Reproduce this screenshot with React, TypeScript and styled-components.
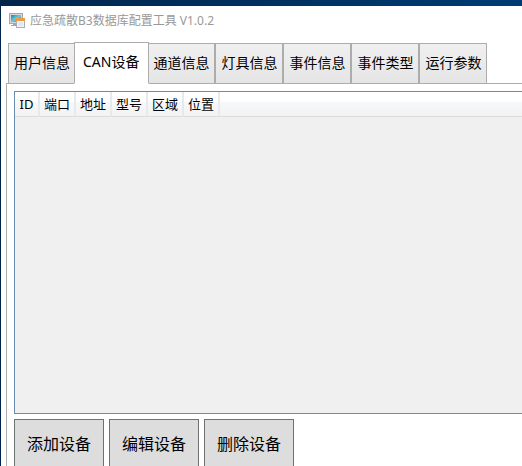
import React, { useState } from "react";
import styled, { createGlobalStyle } from "styled-components";

const GlobalStyle = createGlobalStyle`
  * { box-sizing: border-box; }
  body {
    margin: 0;
    overflow: hidden;
    font-family: "Noto Sans", "Noto Sans CJK SC", sans-serif;
    color: #000;
    background: #fff;
  }
  button { font-family: inherit; color: inherit; }
`;

const Desktop = styled.div`
  height: 100vh;
  overflow: hidden;
  padding: 6px 0 0 1px;
  background: linear-gradient(90deg, #01244a, #003c74);
`;

const AppWindow = styled.div`
  min-height: 100%;
  background: #fff;
`;

const TitleBar = styled.header`
  display: flex;
  align-items: center;
  gap: 5px;
  height: 29px;
  padding-left: 8px;
`;

const Title = styled.h1`
  margin: 0;
  font-size: 12px;
  line-height: 16px;
  font-weight: 400;
  color: #999;
  white-space: nowrap;
`;

const TabList = styled.div`
  display: flex;
  align-items: flex-end;
  height: 49px;
  padding-left: 7px;
`;

const Tab = styled.button<{ $active: boolean }>`
  flex: none;
  display: flex;
  align-items: center;
  justify-content: center;
  height: ${(p) => (p.$active ? 42 : 41)}px;
  margin: ${(p) => (p.$active ? "0 -2px" : "0")};
  padding: ${(p) => (p.$active ? "0 9px 2px 8px" : "0 5px 2px")};
  border: 1px solid #acacac;
  border-bottom-color: ${(p) => (p.$active ? "#fff" : "#acacac")};
  background: ${(p) => (p.$active ? "#fff" : "linear-gradient(#f0f0f0, #e5e5e5)")};
  position: relative;
  z-index: ${(p) => (p.$active ? 1 : 0)};
  font-size: 14px;
  line-height: 20px;
  white-space: nowrap;
`;

const TabPanel = styled.main`
  margin: -1px 0 0 5px;
  padding: 7px 0 0 7px;
  border: solid #acacac;
  border-width: 1px 0 0 1px;
`;

const ListView = styled.div`
  height: 323px;
  border: solid #688caf;
  border-width: 1px 0 1px 1px;
  background: #f0f0f0;
`;

const DeviceTable = styled.table`
  width: 100%;
  border-collapse: separate;
  border-spacing: 0;
`;

const HeaderRow = styled.tr`
  background: linear-gradient(#fff 0 40%, #f7f8fa 41%, #f1f2f4);
`;

const HeaderCell = styled.th<{ $width?: number }>`
  width: ${(p) => (p.$width ? `${p.$width}px` : "auto")};
  height: 25px;
  padding: 0;
  border-right: ${(p) => (p.$width ? "2px solid #e8e9eb" : "0")};
  border-bottom: 1px solid #dcdcdc;
  font-size: 13px;
  line-height: 20px;
  font-weight: 400;
  text-align: center;
  white-space: nowrap;
`;

const Actions = styled.div`
  display: flex;
  gap: 5px;
  padding-top: 5px;
`;

const ActionButton = styled.button`
  height: 50px;
  padding: 0 12px;
  border: 1px solid #707070;
  background: #ddd;
  font-size: 16px;
  line-height: 24px;
  white-space: nowrap;
`;

const AppIcon = () => (
  <svg width="16" height="16" viewBox="0 0 16 16" aria-hidden="true">
    <defs>
      <linearGradient id="screen" x1="0" y1="0" x2="1" y2="1">
        <stop offset="0" stopColor="#1b83a6" />
        <stop offset="0.5" stopColor="#6fc6dc" />
        <stop offset="1" stopColor="#2a8fb4" />
      </linearGradient>
    </defs>
    <rect x="0.5" y="0.5" width="13" height="10" fill="#d8d8d8" stroke="#a3a7aa" />
    <rect x="2" y="2" width="10" height="7" fill="url(#screen)" />
    <path d="M4 11h4v1h1v1H2v-1h2z" fill="#a6a6a6" />
    <rect x="7.5" y="5.5" width="8" height="9" fill="#f4f5fa" stroke="#a9adba" />
    <rect x="7" y="5" width="9" height="3" fill="#ee9a42" />
    <path d="M9 10h5M9 12h5" stroke="#d2d6e6" />
  </svg>
);

const tabs = ["用户信息", "CAN设备", "通道信息", "灯具信息", "事件信息", "事件类型", "运行参数"];

const columns = [
  { label: "ID", width: 25 },
  { label: "端口", width: 36 },
  { label: "地址", width: 36 },
  { label: "型号", width: 36 },
  { label: "区域", width: 36 },
  { label: "位置", width: 36 },
];

const actions = ["添加设备", "编辑设备", "删除设备"];

export default function App() {
  const [active, setActive] = useState(1);

  return (
    <>
      <GlobalStyle />
      <Desktop>
        <AppWindow>
          <TitleBar>
            <AppIcon />
            <Title>应急疏散B3数据库配置工具 V1.0.2</Title>
          </TitleBar>
          <TabList role="tablist">
            {tabs.map((label, i) => (
              <Tab
                key={label}
                role="tab"
                aria-selected={i === active}
                $active={i === active}
                onClick={() => setActive(i)}
              >
                {label}
              </Tab>
            ))}
          </TabList>
          <TabPanel role="tabpanel" aria-label={tabs[active]}>
            <ListView>
              <DeviceTable>
                <thead>
                  <HeaderRow>
                    {columns.map((c) => (
                      <HeaderCell key={c.label} scope="col" $width={c.width}>
                        {c.label}
                      </HeaderCell>
                    ))}
                    <HeaderCell as="td" />
                  </HeaderRow>
                </thead>
                <tbody />
              </DeviceTable>
            </ListView>
            <Actions>
              {actions.map((label) => (
                <ActionButton key={label}>{label}</ActionButton>
              ))}
            </Actions>
          </TabPanel>
        </AppWindow>
      </Desktop>
    </>
  );
}
